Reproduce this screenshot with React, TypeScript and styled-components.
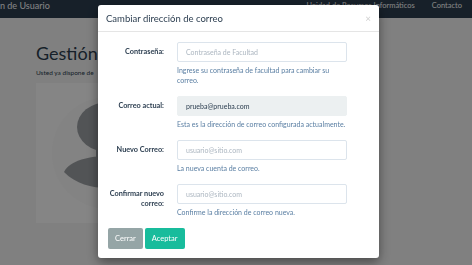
import React from "react";
import styled, { createGlobalStyle } from "styled-components";

const GlobalStyle = createGlobalStyle`
	html, body {
		margin: 0;
		padding: 0;
		width: 472px;
		height: 265px;
		overflow: hidden;
		background: #f6f6f6;
		font-family: "Lato", "Open Sans", sans-serif;
		color: #2c3e50;
	}
	* { box-sizing: border-box; }
`;

const Page = styled.div`
	width: 472px;
	height: 265px;
`;
const Navbar = styled.div`
	display: flex;
	align-items: flex-start;
	height: 18px;
	padding: 0 10px 0 0;
	background: #2c3e50;
	color: #ffffff;
`;
const Brand = styled.div`
	font-size: 9px;
	line-height: 11px;
	margin-right: auto;
`;
const NavLink = styled.div`
	font-size: 7.5px;
	line-height: 11px;
	margin-left: 17px;
`;
const Main = styled.div`
	padding-left: 36px;
`;
const Heading = styled.h1`
	margin: 25px 0 0;
	font-size: 18px;
	line-height: 20px;
	font-weight: 400;
`;
const Lead = styled.p`
	margin: 5px 0 0;
	font-size: 6.5px;
	line-height: 9px;
	font-weight: 400;
`;
const AvatarBox = styled.div`
	width: 144px;
	height: 140px;
	margin-top: 6px;
	background: #ffffff;
`;

const Backdrop = styled.div`
	position: fixed;
	inset: 0;
	background: rgba(0, 0, 0, 0.48);
	display: flex;
	justify-content: center;
	align-items: flex-start;
	padding-left: 5px;
`;
const Modal = styled.div`
	width: 281px;
	margin-top: 5px;
	background: #ffffff;
	border-radius: 3px;
	box-shadow: 0 4px 12px rgba(0, 0, 0, 0.45);
`;
const ModalHeader = styled.div`
	display: flex;
	align-items: center;
	justify-content: space-between;
	height: 27px;
	padding: 0 8px;
	border-bottom: 1px solid #e5e5e5;
`;
const Title = styled.div`
	font-size: 9.5px;
	color: #2c3e50;
`;
const Close = styled.span`
	font-size: 10px;
	color: #000;
	opacity: 0.2;
`;
const ModalBody = styled.div`
	display: flex;
	flex-direction: column;
	gap: 11px;
	padding: 10px 0 0 8px;
`;
const Row = styled.div`
	display: grid;
	grid-template-columns: 58px 170px;
	column-gap: 13px;
`;
const Label = styled.label`
	grid-row: span 2;
	padding-top: 5px;
	text-align: right;
	font-size: 7.3px;
	line-height: 10px;
	font-weight: 700;
	color: #2c3e50;
`;
const Input = styled.input`
	height: 20px;
	width: 170px;
	padding: 0 8px;
	border: 1px solid ${(p) => (p.disabled ? "#ecf0f1" : "#dce4ec")};
	border-radius: 2px;
	background: ${(p) => (p.disabled ? "#ecf0f1" : "#ffffff")};
	font-family: "Lato", sans-serif;
	font-size: 7px;
	color: #2c3e50;
	outline: none;
	&::placeholder {
		color: #acb6c0;
	}
`;
const Help = styled.div`
	margin-top: 3px;
	font-size: 7px;
	line-height: 10px;
	color: #597ea2;
`;
const Footer = styled.div`
	display: flex;
	gap: 2px;
	padding: 11px 10px 9px;
`;
const Button = styled.button<{ $tone: string }>`
	height: 21px;
	padding: 0 7px;
	border: none;
	border-radius: 2px;
	background: ${(p) => p.$tone};
	color: #ffffff;
	font-family: "Lato", sans-serif;
	font-size: 7.5px;
`;

const Silhouette = () => (
	<svg width="144" height="140" viewBox="0 0 144 140">
		<circle cx="72" cy="70" r="56" fill="#fbfbfb" />
		<ellipse cx="72" cy="44" rx="31" ry="25" fill="#9ea2a6" />
		<rect x="60" y="60" width="24" height="16" fill="#9ea2a6" />
		<path
			d="M28 89 C34 77 54 73 72 73 C90 73 110 77 116 89 C104 101 89 105 72 105 C55 105 40 101 28 89 Z"
			fill="#9ea2a6"
		/>
	</svg>
);

const fields = [
	{
		label: "Contraseña:",
		placeholder: "Contraseña de Facultad",
		help: "Ingrese su contraseña de facultad para cambiar su correo.",
	},
	{
		label: "Correo actual:",
		value: "prueba@prueba.com",
		help: "Esta es la dirección de correo configurada actualmente.",
	},
	{
		label: "Nuevo Correo:",
		placeholder: "usuario@sitio.com",
		help: "La nueva cuenta de correo.",
	},
	{
		label: "Confirmar nuevo correo:",
		placeholder: "usuario@sitio.com",
		help: "Confirme la dirección de correo nueva.",
	},
];

const App = () => {
	return (
		<Page>
			<GlobalStyle />
			<Navbar>
				<Brand>n de Usuario</Brand>
				<NavLink>Unidad de Recursos Informáticos</NavLink>
				<NavLink>Contacto</NavLink>
			</Navbar>
			<Main>
				<Heading>Gestión</Heading>
				<Lead>Usted ya dispone de</Lead>
				<AvatarBox>
					<Silhouette />
				</AvatarBox>
			</Main>
			<Backdrop>
				<Modal>
					<ModalHeader>
						<Title>Cambiar dirección de correo</Title>
						<Close>×</Close>
					</ModalHeader>
					<ModalBody>
						{fields.map((f) => (
							<Row key={f.label}>
								<Label>{f.label}</Label>
								{f.value ? (
									<Input disabled value={f.value} readOnly />
								) : (
									<Input placeholder={f.placeholder} />
								)}
								<Help>{f.help}</Help>
							</Row>
						))}
					</ModalBody>
					<Footer>
						<Button $tone="#95a5a6">Cerrar</Button>
						<Button $tone="#18bc9c">Aceptar</Button>
					</Footer>
				</Modal>
			</Backdrop>
		</Page>
	);
};

export default App;
